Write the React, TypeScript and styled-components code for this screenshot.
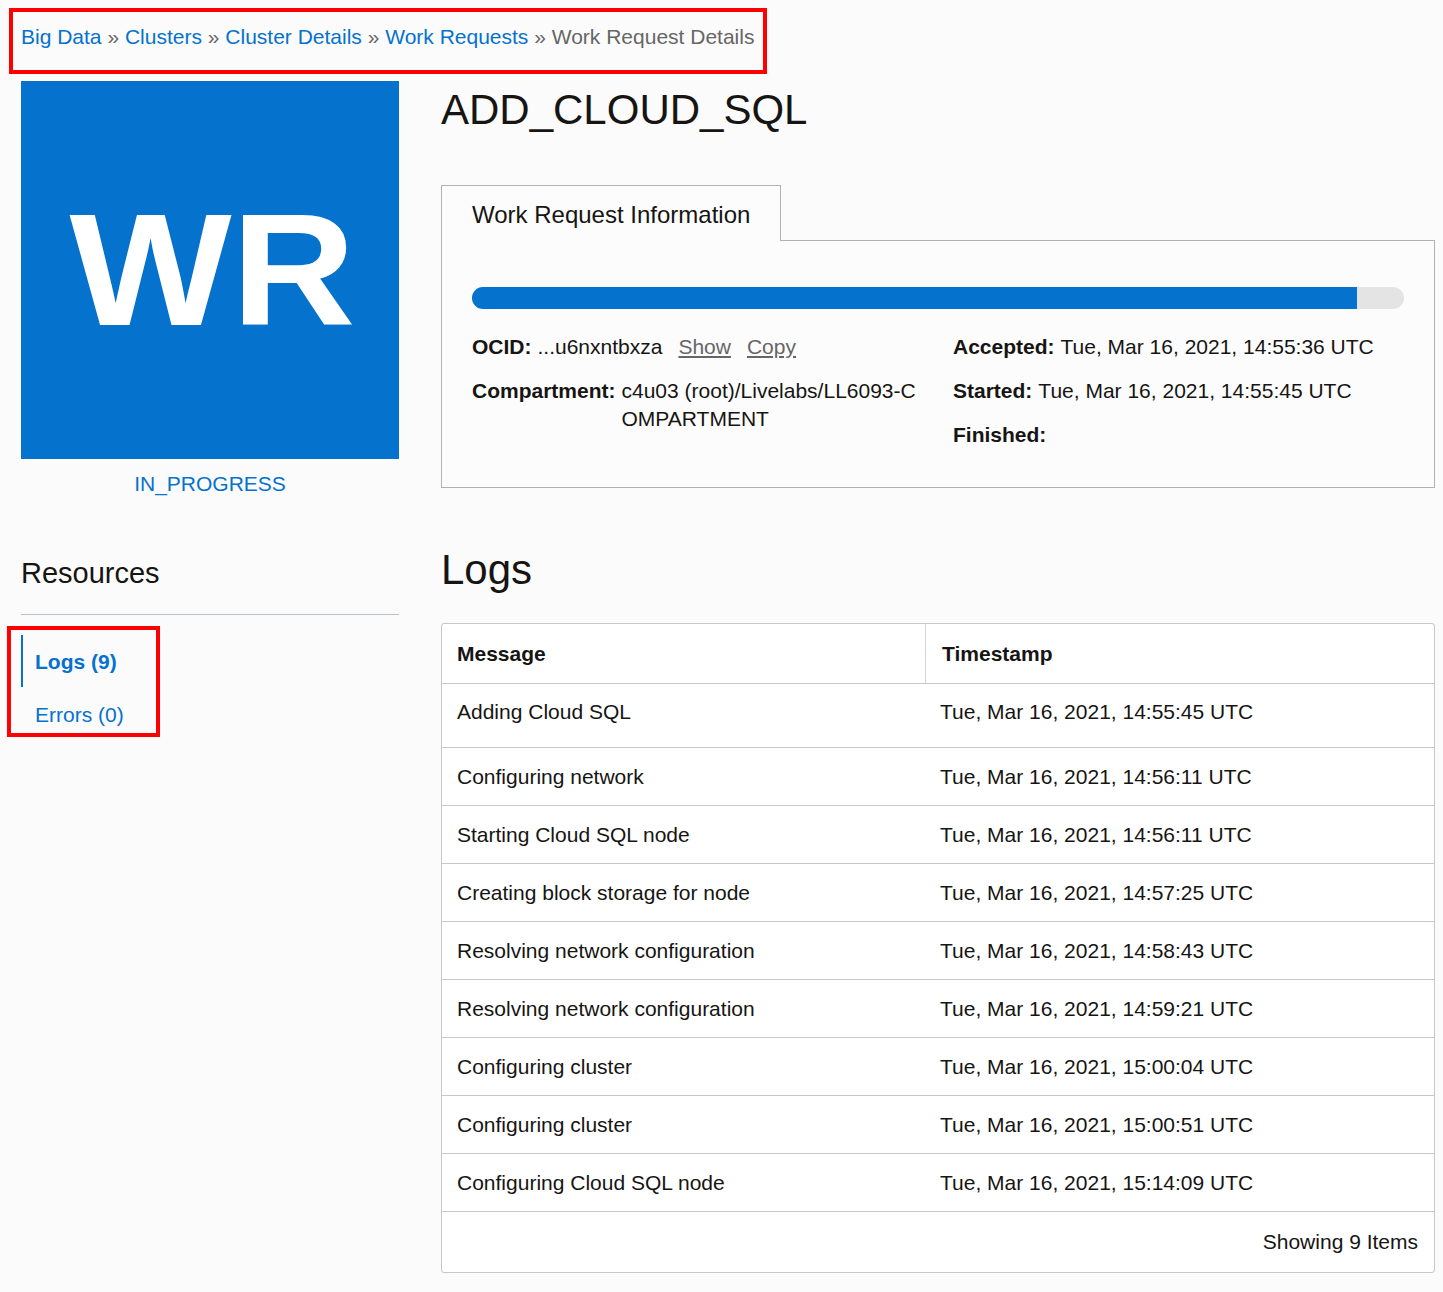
import React from "react";
import styled, { createGlobalStyle } from "styled-components";

const GlobalStyle = createGlobalStyle`
  html, body { margin: 0; padding: 0; background: #fbfbfb; }
  body {
    font-family: "Liberation Sans", Arial, sans-serif;
    color: #161513;
  }
  *, *::before, *::after { box-sizing: border-box; }
`;

const BLUE = "#0572ce";

const Page = styled.div`
  width: 1443px;
  padding: 8px 8px 19px 9px;
`;

const Annotated = styled.div`
  border: 4px solid #ff0000;
`;

const BreadcrumbBox = styled(Annotated)`
  width: max-content;
  padding: 13px 9px 21px 8px;
  font-size: 21px;
  line-height: 24px;
  white-space: nowrap;
`;

const Crumb = styled.a`
  color: ${BLUE};
  text-decoration: none;
`;

const Sep = styled.span`
  color: #666666;
`;

const Current = styled.span`
  color: #666666;
`;

const Main = styled.div`
  display: grid;
  grid-template-columns: 378px 994px;
  column-gap: 42px;
  margin: 7px 0 0 12px;
  align-items: start;
`;

const LeftCol = styled.div`
  display: flex;
  flex-direction: column;
`;

const Logo = styled.div`
  width: 378px;
  height: 378px;
  background: ${BLUE};
  display: flex;
  align-items: center;
  justify-content: center;
`;

const LogoText = styled.span`
  color: #ffffff;
  font-weight: 700;
  font-size: 159px;
  line-height: 159px;
  display: inline-block;
  transform: translateX(2px) scaleX(1.08);
`;

const Status = styled.div`
  margin-top: 13px;
  text-align: center;
  color: ${BLUE};
  font-size: 21px;
  line-height: 24px;
`;

const ResourcesTitle = styled.h2`
  margin: 59px 0 0;
  font-weight: 400;
  font-size: 29px;
  line-height: 36px;
  padding-bottom: 23px;
  border-bottom: 1px solid #bcc1c7;
`;

const NavBox = styled(Annotated)`
  margin: 11px 0 0 -14px;
  width: 153px;
  padding: 5px 0 0 10px;
`;

const NavItem = styled.a<{ $active?: boolean }>`
  display: block;
  color: ${BLUE};
  text-decoration: none;
  font-size: 21px;
  line-height: 24px;
  font-weight: ${(p) => (p.$active ? 700 : 400)};
  border-left: 2px solid ${(p) => (p.$active ? BLUE : "transparent")};
  padding: ${(p) => (p.$active ? "15px 0 13px 12px" : "16px 0 6px 12px")};
`;

const RightCol = styled.div`
  display: flex;
  flex-direction: column;
`;

const Title = styled.h1`
  margin: 0;
  font-weight: 400;
  font-size: 42px;
  line-height: 58px;
`;

const TabBar = styled.div`
  display: flex;
  margin-top: 46px;
`;

const Tab = styled.div`
  border: 1px solid #b1b1b1;
  border-bottom: none;
  padding: 15px 30px 12px;
  font-size: 24px;
  line-height: 28px;
  background: #fcfcfc;
`;

const TabFiller = styled.div`
  flex: 1;
  border-bottom: 1px solid #b1b1b1;
`;

const Panel = styled.div`
  border: 1px solid #b1b1b1;
  border-top: none;
  padding: 46px 30px 38px;
  background: #fcfcfc;
`;

const Track = styled.div`
  height: 22px;
  border-radius: 11px;
  background: #e4e4e4;
  overflow: hidden;
`;

const Fill = styled.div`
  height: 100%;
  background: ${BLUE};
`;

const DetailsGrid = styled.div`
  margin-top: 24px;
  display: grid;
  grid-template-columns: 1fr 1fr;
  column-gap: 30px;
`;

const DetailCol = styled.div`
  display: flex;
  flex-direction: column;
  gap: 16px;
`;

const Field = styled.div`
  display: flex;
  column-gap: 6px;
  font-size: 21px;
  line-height: 28px;
`;

const Label = styled.span`
  font-weight: 700;
  flex: none;
`;

const Value = styled.span`
  word-break: break-all;
`;

const ActionLink = styled.a`
  color: #666666;
  text-decoration: underline;
  margin-left: 16px;
  word-break: normal;
`;

const LogsTitle = styled.h2`
  margin: 57px 0 28px;
  font-weight: 400;
  font-size: 42px;
  line-height: 50px;
`;

const TableWrap = styled.div`
  border: 1px solid #c5c8cd;
  border-radius: 3px;
  background: #ffffff;
  overflow: hidden;
  font-size: 21px;
  line-height: 24px;
`;

const HeadRow = styled.div`
  display: grid;
  grid-template-columns: 484px 1fr;
  border-bottom: 1px solid #c5c8cd;
`;

const HeadCell = styled.div`
  height: 59px;
  display: flex;
  align-items: center;
  padding: 0 15px;
  font-weight: 700;
  &:first-child {
    border-right: 1px solid #cfd2d6;
  }
  &:last-child {
    padding-left: 16px;
  }
`;

const Body = styled.div`
  display: flex;
  flex-direction: column;
`;

const Row = styled.div`
  display: grid;
  grid-template-columns: 484px 1fr;
  min-height: 58px;
  border-bottom: 1px solid #c5c8cd;
  &:first-child {
    min-height: 64px;
    padding-bottom: 7px;
  }
`;

const Cell = styled.div<{ $pad: number }>`
  display: flex;
  align-items: center;
  padding-left: ${(p) => p.$pad}px;
`;

const Footer = styled.div`
  height: 60px;
  display: flex;
  align-items: center;
  justify-content: flex-end;
  padding-right: 16px;
`;

const logs: [string, string][] = [
  ["Adding Cloud SQL", "Tue, Mar 16, 2021, 14:55:45 UTC"],
  ["Configuring network", "Tue, Mar 16, 2021, 14:56:11 UTC"],
  ["Starting Cloud SQL node", "Tue, Mar 16, 2021, 14:56:11 UTC"],
  ["Creating block storage for node", "Tue, Mar 16, 2021, 14:57:25 UTC"],
  ["Resolving network configuration", "Tue, Mar 16, 2021, 14:58:43 UTC"],
  ["Resolving network configuration", "Tue, Mar 16, 2021, 14:59:21 UTC"],
  ["Configuring cluster", "Tue, Mar 16, 2021, 15:00:04 UTC"],
  ["Configuring cluster", "Tue, Mar 16, 2021, 15:00:51 UTC"],
  ["Configuring Cloud SQL node", "Tue, Mar 16, 2021, 15:14:09 UTC"],
];

const progress = 95;

export default function App() {
  return (
    <>
      <GlobalStyle />
      <Page>
        <BreadcrumbBox>
          <Crumb href="#">Big Data</Crumb>
          <Sep> » </Sep>
          <Crumb href="#">Clusters</Crumb>
          <Sep> » </Sep>
          <Crumb href="#">Cluster Details</Crumb>
          <Sep> » </Sep>
          <Crumb href="#">Work Requests</Crumb>
          <Sep> » </Sep>
          <Current>Work Request Details</Current>
        </BreadcrumbBox>

        <Main>
          <LeftCol>
            <Logo>
              <LogoText>WR</LogoText>
            </Logo>
            <Status>IN_PROGRESS</Status>
            <ResourcesTitle>Resources</ResourcesTitle>
            <NavBox>
              <NavItem href="#" $active>
                Logs (9)
              </NavItem>
              <NavItem href="#">Errors (0)</NavItem>
            </NavBox>
          </LeftCol>

          <RightCol>
            <Title>ADD_CLOUD_SQL</Title>
            <TabBar>
              <Tab>Work Request Information</Tab>
              <TabFiller />
            </TabBar>
            <Panel>
              <Track>
                <Fill style={{ width: `${progress}%` }} />
              </Track>
              <DetailsGrid>
                <DetailCol>
                  <Field>
                    <Label>OCID:</Label>
                    <Value>
                      ...u6nxntbxza<ActionLink href="#">Show</ActionLink>
                      <ActionLink href="#">Copy</ActionLink>
                    </Value>
                  </Field>
                  <Field>
                    <Label>Compartment:</Label>
                    <Value>c4u03 (root)/Livelabs/LL6093-COMPARTMENT</Value>
                  </Field>
                </DetailCol>
                <DetailCol>
                  <Field>
                    <Label>Accepted:</Label>
                    <Value>Tue, Mar 16, 2021, 14:55:36 UTC</Value>
                  </Field>
                  <Field>
                    <Label>Started:</Label>
                    <Value>Tue, Mar 16, 2021, 14:55:45 UTC</Value>
                  </Field>
                  <Field>
                    <Label>Finished:</Label>
                  </Field>
                </DetailCol>
              </DetailsGrid>
            </Panel>

            <LogsTitle>Logs</LogsTitle>
            <TableWrap>
              <HeadRow>
                <HeadCell>Message</HeadCell>
                <HeadCell>Timestamp</HeadCell>
              </HeadRow>
              <Body>
                {logs.map(([msg, ts], i) => (
                  <Row key={i}>
                    <Cell $pad={15}>{msg}</Cell>
                    <Cell $pad={14}>{ts}</Cell>
                  </Row>
                ))}
              </Body>
              <Footer>Showing 9 Items</Footer>
            </TableWrap>
          </RightCol>
        </Main>
      </Page>
    </>
  );
}
